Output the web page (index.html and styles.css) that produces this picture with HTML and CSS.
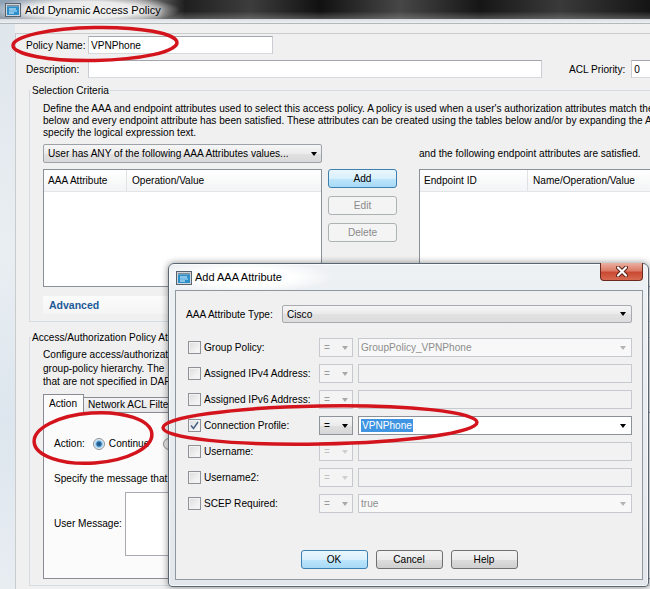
FILE: index.html
```html
<!DOCTYPE html>
<html lang="en">
<head>
<meta charset="utf-8">
<title>Add Dynamic Access Policy</title>
<link rel="stylesheet" href="styles.css">
</head>
<body>
<div class="screen">
  <div class="main-window">
    <div class="titlebar">
      <svg class="app-icon" width="16" height="15" viewBox="0 0 16 15">
        <rect x="0.5" y="1.5" width="15" height="13" fill="#cfd6dd" stroke="#56616c"/>
        <rect x="2" y="3" width="12" height="1.5" fill="#7d8a96"/>
        <rect x="2" y="4.5" width="12" height="8.5" fill="#2b8fcb"/>
        <rect x="4" y="6.5" width="7" height="1" fill="#e8f7ff"/>
        <rect x="4" y="8.5" width="8" height="1" fill="#bfe8ff"/>
        <rect x="4" y="10.5" width="5" height="1" fill="#e8f7ff"/>
      </svg>
      <span class="title">Add Dynamic Access Policy</span>
    </div>
    <div class="frame-band"></div>
    <div class="frame-body">
      <div class="frame-left"></div>
      <div class="client">
        <div class="panel">
          <div class="form-row">
            <span class="lbl">Policy Name:</span>
            <div class="input name-input">VPNPhone</div>
          </div>
          <div class="form-row">
            <span class="lbl">Description:</span>
            <div class="input desc-input"></div>
            <span class="lbl-acl">ACL Priority:</span>
            <div class="input acl-input">0</div>
          </div>

          <fieldset class="group sel-group">
            <legend>Selection Criteria</legend>
            <p class="desc">Define the AAA and endpoint attributes used to select this access policy. A policy is used when a user's authorization attributes match the AAA attribute criteria<br>below and every endpoint attribute has been satisfied. These attributes can be created using the tables below and/or by expanding the Advanced option to<br>specify the logical expression text.</p>
            <div class="criteria">
              <div class="combo combo-any"><span>User has ANY of the following AAA Attributes values...</span><span class="arrow"></span></div>
              <div class="spacer"></div>
              <div class="ep-caption">and the following endpoint attributes are satisfied.</div>

              <div class="table aaa-table">
                <div class="thead">
                  <div class="th th-aaa">AAA Attribute</div>
                  <div class="th">Operation/Value</div>
                </div>
              </div>
              <div class="btn-col">
                <div class="btn btn-focus">Add</div>
                <div class="btn btn-disabled">Edit</div>
                <div class="btn btn-disabled">Delete</div>
              </div>
              <div class="table ep-table">
                <div class="thead">
                  <div class="th th-ep">Endpoint ID</div>
                  <div class="th">Name/Operation/Value</div>
                </div>
              </div>
            </div>
            <div class="advanced">Advanced</div>
          </fieldset>

          <fieldset class="group pol-group">
            <legend>Access/Authorization Policy Attributes</legend>
            <p class="desc desc-tall">Configure access/authorization<br>group-policy hierarchy. The<br>that are not specified in DAP.</p>
            <div class="tabs">
              <div class="tab tab-active">Action</div>
              <div class="tab">Network ACL Filters</div>
            </div>
            <div class="tab-panel">
              <div class="action-row">
                <span>Action:</span>
                <span class="radio radio-on"></span><span class="radio-lbl">Continue</span>
                <span class="radio radio-next"></span>
              </div>
              <div class="specify">Specify the message that</div>
              <div class="msg-row">
                <span class="msg-lbl">User Message:</span>
                <div class="textarea"></div>
              </div>
            </div>
          </fieldset>
        </div>
      </div>
    </div>
  </div>

  <div class="dialog">
    <div class="dlg-titlebar">
      <svg class="app-icon" width="16" height="15" viewBox="0 0 16 15">
        <rect x="0.5" y="1.5" width="15" height="13" fill="#cfd6dd" stroke="#56616c"/>
        <rect x="2" y="3" width="12" height="1.5" fill="#7d8a96"/>
        <rect x="2" y="4.5" width="12" height="8.5" fill="#2b8fcb"/>
        <rect x="4" y="6.5" width="7" height="1" fill="#e8f7ff"/>
        <rect x="4" y="8.5" width="8" height="1" fill="#bfe8ff"/>
        <rect x="4" y="10.5" width="5" height="1" fill="#e8f7ff"/>
      </svg>
      <span class="title">Add AAA Attribute</span>
    </div>
    <div class="close-btn">
      <svg width="14" height="11" viewBox="0 0 14 11">
        <path d="M3 1.5 L11 9.5 M11 1.5 L3 9.5" stroke="#5a1d12" stroke-width="4" stroke-linecap="round"/>
        <path d="M3 1.5 L11 9.5 M11 1.5 L3 9.5" stroke="#ffffff" stroke-width="2.2" stroke-linecap="round"/>
      </svg>
    </div>
    <div class="dlg-panel">
      <div class="type-row">
        <span class="type-lbl">AAA Attribute Type:</span>
        <div class="combo combo-type"><span>Cisco</span><span class="arrow"></span></div>
      </div>
      <div class="attr-list">
        <div class="attr-row">
          <div class="attr-name"><span class="cb"></span><span>Group Policy:</span></div>
          <div class="op"><span>=</span><span class="arrow"></span></div>
          <div class="val val-combo-off"><span>GroupPolicy_VPNPhone</span><span class="arrow"></span></div>
        </div>
        <div class="attr-row">
          <div class="attr-name"><span class="cb"></span><span>Assigned IPv4 Address:</span></div>
          <div class="op"><span>=</span><span class="arrow"></span></div>
          <div class="val val-off"></div>
        </div>
        <div class="attr-row">
          <div class="attr-name"><span class="cb"></span><span>Assigned IPv6 Address:</span></div>
          <div class="op"><span>=</span><span class="arrow"></span></div>
          <div class="val val-off"></div>
        </div>
        <div class="attr-row">
          <div class="attr-name">
            <span class="cb cb-on"><svg width="11" height="11" viewBox="0 0 11 11"><path d="M2 5.5 L4.5 8.5 L9 2" fill="none" stroke="#4a6284" stroke-width="1.5"/></svg></span>
            <span>Connection Profile:</span>
          </div>
          <div class="op op-on"><span>=</span><span class="arrow"></span></div>
          <div class="val val-on"><span class="sel">VPNPhone</span><span class="arrow"></span></div>
        </div>
        <div class="attr-row">
          <div class="attr-name"><span class="cb"></span><span>Username:</span></div>
          <div class="op op-faint"><span>=</span><span class="arrow"></span></div>
          <div class="val val-off"></div>
        </div>
        <div class="attr-row">
          <div class="attr-name"><span class="cb"></span><span>Username2:</span></div>
          <div class="op op-faint"><span>=</span><span class="arrow"></span></div>
          <div class="val val-off"></div>
        </div>
        <div class="attr-row">
          <div class="attr-name"><span class="cb"></span><span>SCEP Required:</span></div>
          <div class="op"><span>=</span><span class="arrow"></span></div>
          <div class="val val-combo-off"><span>true</span><span class="arrow"></span></div>
        </div>
      </div>
      <div class="dlg-buttons">
        <div class="btn dbtn btn-focus">OK</div>
        <div class="btn dbtn">Cancel</div>
        <div class="btn dbtn">Help</div>
      </div>
    </div>
  </div>

  <svg class="marks" width="650" height="589" viewBox="0 0 650 589">
    <ellipse cx="95" cy="44" rx="82" ry="16.5" transform="rotate(-1 95 44)"/>
    <ellipse cx="93" cy="438" rx="59" ry="25" transform="rotate(-4 93 438)"/>
    <ellipse cx="320" cy="425" rx="157" ry="19" transform="rotate(-1 320 425)"/>
  </svg>
</div>
</body>
</html>
```

FILE: styles.css
```css
* { box-sizing: border-box; }

html, body {
  margin: 0;
  padding: 0;
}

body {
  width: 650px;
  height: 589px;
  overflow: hidden;
  font-family: "Liberation Sans", Arial, sans-serif;
  font-size: 10.1px;
  color: #000;
  background: #f0f0f0;
}

.screen {
  position: relative;
  width: 650px;
  height: 589px;
  overflow: hidden;
}

/* ---------- main window ---------- */
.main-window {
  width: 780px;
  height: 589px;
  display: flex;
  flex-direction: column;
}

.titlebar {
  height: 19px;
  display: flex;
  align-items: center;
  gap: 4px;
  padding-left: 5px;
  background:
    radial-gradient(ellipse 95px 15px at 85px 10px, rgba(236,236,236,1) 55%, rgba(236,236,236,0) 100%),
    linear-gradient(180deg, rgba(0,0,0,0) 60%, rgba(150,150,150,0.45) 100%),
    linear-gradient(90deg, #8fa3b6 0, #8a8a8a 140px, #1f1f1f 185px, #3d3d3d 250px, #111 320px, #474747 400px, #161616 480px, #3a3a3a 560px, #141414 650px);
}

.title {
  font-size: 11px;
  color: #000;
  text-shadow: 0 0 5px #fff, 0 0 8px #fff;
  white-space: nowrap;
}

.app-icon { flex: none; }

.frame-band {
  height: 4px;
  background: linear-gradient(#d8dde2, #eef1f3);
}

.frame-body {
  flex: 1;
  display: flex;
  border-top: 1px solid #b3b8bd;
}

.frame-left {
  width: 15px;
  flex: none;
  background: linear-gradient(180deg, #dfe6ec 0, #e9eef2 40%, #dde6ee 70%, #e8edf2 100%);
}

.client {
  flex: 1;
  display: flex;
  flex-direction: column;
  background: #f0f0f0;
  padding-top: 9px;
}

.panel {
  flex: 1;
  border-left: 1px solid #c9cbcd;
  border-top: 1px solid #c9cbcd;
  padding: 2px 0 0 10px;
}

.form-row {
  display: flex;
  align-items: center;
  height: 18px;
}

.form-row + .form-row { margin-top: 6px; }

.lbl { width: 62px; flex: none; }

.input {
  height: 18px;
  display: flex;
  align-items: center;
  padding-left: 2px;
  background: #fff;
  border: 1px solid #abadb3;
  border-color: #a3a6ad #c9ccd2 #d6d9de #c9ccd2;
}

.name-input { width: 185px; }
.desc-input { width: 454px; }
.lbl-acl { margin-left: 27px; white-space: nowrap; }
.acl-input { width: 40px; margin-left: 6px; }

/* ---------- group boxes ---------- */
.group {
  margin: 6px 0 0 3px;
  padding: 5px 0 7px 13px;
  border: 1px solid #d5dbe0;
  border-right: none;
  min-width: 0;
}

.group legend {
  padding: 0 1px;
  margin-left: -12px;
  line-height: 13px;
}

.desc {
  margin: 0;
  line-height: 12px;
  white-space: nowrap;
}

.sel-group .desc { padding-top: 1px; }

.desc-tall { line-height: 13.5px; }

.criteria {
  margin-top: 5px;
  display: grid;
  grid-template-columns: 279px 69px 400px;
  grid-template-rows: 19px 118px;
  column-gap: 6px;
  row-gap: 6px;
}

.combo {
  height: 19px;
  display: flex;
  align-items: center;
  padding: 0 4px;
  border: 1px solid #9da2a8;
  border-radius: 2px;
  background: linear-gradient(#f6f6f6, #ececec 50%, #e1e1e1 51%, #d9d9d9);
  white-space: nowrap;
}

.combo .arrow { margin-left: auto; }

.arrow {
  flex: none;
  width: 0;
  height: 0;
  border-left: 3.5px solid transparent;
  border-right: 3.5px solid transparent;
  border-top: 4px solid #000;
}

.ep-caption {
  margin-left: 16px;
  align-self: center;
  white-space: nowrap;
}

.table {
  background: #fff;
  border: 1px solid #8c9199;
}

.ep-table { margin-left: 16px; }

.thead {
  height: 22px;
  display: flex;
  background: linear-gradient(#ffffff, #f3f4f5);
  border-bottom: 1px solid #e3e5e8;
}

.th {
  display: flex;
  align-items: center;
  padding-left: 5px;
  white-space: nowrap;
}

.th-aaa { width: 83px; border-right: 1px solid #dfe2e5; padding-left: 4px; }
.th-ep { width: 108px; border-right: 1px solid #dfe2e5; padding-left: 4px; }

.btn-col {
  display: flex;
  flex-direction: column;
  gap: 8px;
}

.btn {
  height: 19px;
  display: flex;
  align-items: center;
  justify-content: center;
  border: 1px solid #707070;
  border-radius: 3px;
  background: linear-gradient(#f3f3f3, #ebebeb 50%, #dddddd 51%, #cfcfcf);
}

.btn-focus {
  border-color: #3c7fb1;
  background: linear-gradient(#eaf6fd, #d9f0fc 50%, #bee6fd 51%, #a7d9f5);
}

.btn-disabled {
  color: #8a8a8a;
  border-color: #adb2b5;
  background: #f4f4f4;
}

.advanced {
  margin-top: 9px;
  height: 18px;
  line-height: 18px;
  padding-left: 6px;
  font-weight: bold;
  font-size: 10.5px;
  color: #1e5b98;
  background: linear-gradient(#fbfbfb, #f5f5f5);
}

.pol-group { margin-top: 9px; padding-top: 4px; padding-bottom: 6px; }

.tabs {
  margin-top: 5px;
  display: flex;
  align-items: flex-end;
  height: 18px;
}

.tab {
  height: 15px;
  display: flex;
  align-items: center;
  padding: 0 4px;
  border: 1px solid #898c95;
  border-bottom: none;
  border-left: none;
  background: linear-gradient(#f4f4f4, #e6e6e6);
  white-space: nowrap;
}

.tab-active {
  width: 41px;
  padding-left: 5px;
  border-left: 1px solid #898c95;
  background: #fbfbfb;
  position: relative;
  margin-bottom: -1px;
  height: 19px;
}

.tab-panel {
  height: 167px;
  border: 1px solid #898c95;
  background: #fbfbfb;
  padding: 23px 0 0 10px;
}

.action-row {
  height: 16px;
  display: flex;
  align-items: center;
}

.radio {
  width: 12px;
  height: 12px;
  border-radius: 50%;
  border: 1px solid #8e9297;
  background: radial-gradient(circle, #f8f8f8 0, #e4e4e4 70%);
  flex: none;
}

.radio-on {
  margin-left: 8px;
  background: radial-gradient(circle, #1f4f7c 0, #2b6da3 2.2px, #8cc5ea 3.2px, #d9eefa 4.5px, #f2f2f2 5.5px);
}

.radio-next { margin-left: 14px; }

.radio-lbl { margin-left: 4px; }

.specify {
  margin-top: 21px;
  line-height: 12px;
  white-space: nowrap;
}

.msg-row {
  margin-top: 7px;
  display: flex;
  align-items: center;
}

.msg-lbl { width: 71px; flex: none; }

.textarea {
  width: 220px;
  height: 64px;
  background: #fff;
  border: 1px solid #a8abb2;
}

/* ---------- dialog ---------- */
.dialog {
  position: absolute;
  left: 168px;
  top: 263px;
  width: 481px;
  height: 324px;
  display: flex;
  flex-direction: column;
  padding: 0 5px 6px 6px;
  border: 1px solid #5b6673;
  border-radius: 6px 6px 4px 4px;
  background:
    radial-gradient(ellipse 90px 16px at 75px 13px, rgba(255,255,255,1) 55%, rgba(255,255,255,0) 100%),
    linear-gradient(180deg, #eef1f4, #e3e7eb);
  box-shadow: 0 0 7px rgba(0,0,0,0.45), inset 0 0 0 1px rgba(255,255,255,0.7);
}

.dlg-titlebar {
  height: 26px;
  display: flex;
  align-items: center;
  gap: 3px;
  padding-left: 1px;
}

.close-btn {
  position: absolute;
  right: 5px;
  top: -1px;
  width: 43px;
  height: 18px;
  display: flex;
  align-items: center;
  justify-content: center;
  border: 1px solid #6b2a1f;
  border-top: none;
  border-radius: 0 0 4px 4px;
  background: linear-gradient(#eab0a2, #dc7b67 45%, #c94a31 55%, #d86a52);
}

.dlg-panel {
  flex: 1;
  display: flex;
  flex-direction: column;
  border: 1px solid #8f979f;
  background: #f0f0f0;
  padding: 14px 10px 10px 10px;
}

.type-row {
  display: flex;
  align-items: center;
  height: 18px;
}

.type-lbl { width: 96px; flex: none; white-space: nowrap; }

.combo-type {
  flex: 1;
  height: 18px;
  border-color: #a7abb0;
  background: linear-gradient(#f5f5f5, #ebebeb 50%, #e2e2e2 51%, #dcdcdc);
}

.combo-type .arrow { margin-right: 1px; }

.attr-list {
  margin-top: 15px;
  display: flex;
  flex-direction: column;
  gap: 7px;
}

.attr-row {
  height: 19px;
  display: flex;
  align-items: center;
}

.attr-name {
  width: 133px;
  flex: none;
  display: flex;
  align-items: center;
  white-space: nowrap;
}

.cb {
  width: 13px;
  height: 13px;
  margin: 0 3px 0 2px;
  flex: none;
  display: flex;
  align-items: center;
  justify-content: center;
  border: 1px solid #8e9297;
  background: linear-gradient(135deg, #dcdcdc, #fbfbfb);
  box-shadow: inset 0 0 0 1px #f2f2f2;
}

.op {
  width: 34px;
  height: 19px;
  flex: none;
  display: flex;
  align-items: center;
  padding: 0 4px;
  border: 1px solid #c6c9cd;
  background: #f4f4f4;
  color: #9a9a9a;
}

.op .arrow { margin-left: auto; border-top-color: #a9a9a9; }

.op-on {
  color: #000;
  border-color: #8f949a;
  background: linear-gradient(#f5f5f5, #ebebeb 50%, #e0e0e0 51%, #d6d6d6);
}

.op-on .arrow { border-top-color: #000; }

.op-faint { color: #c2c2c2; }
.op-faint .arrow { border-top-color: #cfcfcf; }

.val {
  flex: 1;
  height: 19px;
  margin-left: 5px;
  display: flex;
  align-items: center;
  padding: 0 5px 0 2px;
  white-space: nowrap;
}

.val .arrow { margin-left: auto; }

.val-off {
  border: 1px solid #c6c9cd;
  background: #f2f2f2;
}

.val-combo-off {
  border: 1px solid #c6c9cd;
  background: #f8f8f8;
  color: #8d8d8d;
}

.val-combo-off .arrow { border-top-color: #b3b3b3; }

.val-on {
  border: 1px solid #8c9197;
  background: #fff;
}

.sel {
  background: #3f95e2;
  color: #fff;
  line-height: 13px;
  padding: 0 1px;
}

.dlg-buttons {
  margin-top: 37px;
  display: flex;
  justify-content: center;
  gap: 8px;
}

.dbtn { width: 67px; }

/* ---------- annotation marks ---------- */
.marks {
  position: absolute;
  left: 0;
  top: 0;
  pointer-events: none;
}

.marks ellipse {
  fill: none;
  stroke: #d3141d;
  stroke-width: 3.5;
}
```
